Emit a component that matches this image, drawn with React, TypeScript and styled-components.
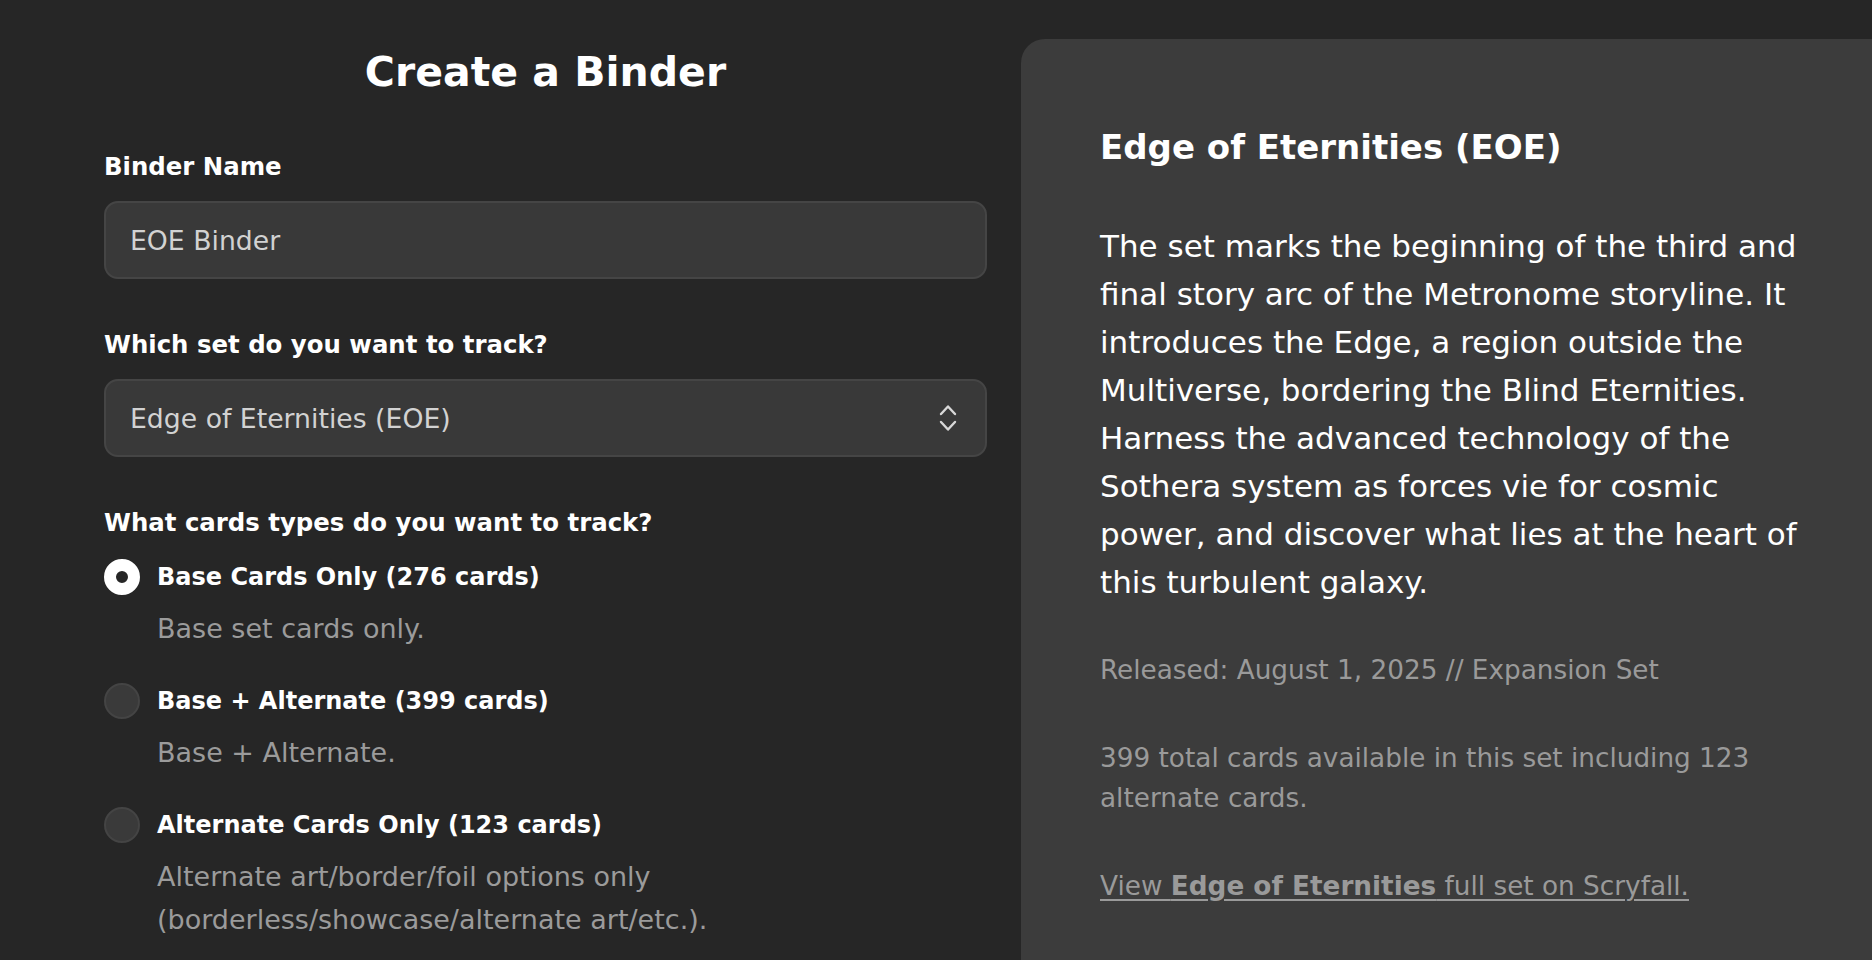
import React from "react";
import styled, { createGlobalStyle } from "styled-components";

const GlobalStyle = createGlobalStyle`
  html, body {
    margin: 0;
    padding: 0;
    background-color: #262626;
    font-family: "DejaVu Sans", "Noto Sans", sans-serif;
    color: #ffffff;
  }
  * {
    box-sizing: border-box;
  }
`;

const Page = styled.div`
  display: flex;
  align-items: flex-start;
  height: 960px;
  overflow: hidden;
`;

const FormColumn = styled.div`
  width: 1021px;
  flex-shrink: 0;
  padding: 48px 34px 0 104px;
`;

const Title = styled.h1`
  margin: 0 0 56px;
  text-align: center;
  font-size: 41px;
  line-height: 48px;
  font-weight: 700;
`;

const Field = styled.div`
  display: flex;
  flex-direction: column;
  gap: 19px;
  margin-bottom: 51px;
`;

const Label = styled.label`
  font-size: 24.4px;
  line-height: 30px;
  font-weight: 700;
  color: #ffffff;
`;

const TextInput = styled.input`
  height: 78px;
  width: 100%;
  border-radius: 14px;
  border: 2px solid #454545;
  background-color: #393939;
  padding: 0 24px;
  font-family: inherit;
  font-size: 26.7px;
  color: #d2d2d2;
  outline: none;
`;

const SelectBox = styled.div`
  height: 78px;
  border-radius: 14px;
  border: 2px solid #454545;
  background-color: #393939;
  padding: 0 28px 0 24px;
  display: flex;
  align-items: center;
  justify-content: space-between;
  font-size: 26.7px;
  color: #d2d2d2;
`;

const Chevrons = styled.svg`
  width: 18px;
  height: 30px;
  flex-shrink: 0;
`;

const RadioList = styled.div`
  display: flex;
  flex-direction: column;
  gap: 33px;
  margin-top: 21px;
`;

const RadioOption = styled.div`
  display: flex;
  flex-direction: column;
  gap: 12px;
`;

const RadioRow = styled.div`
  display: flex;
  align-items: center;
  gap: 17px;
`;

const RadioDot = styled.span<{ $checked?: boolean }>`
  width: 36px;
  height: 36px;
  border-radius: 50%;
  flex-shrink: 0;
  background-color: ${(p) => (p.$checked ? "#262626" : "#3a3a3a")};
  border: ${(p) => (p.$checked ? "12px solid #ffffff" : "2px solid #444444")};
`;

const RadioLabel = styled.span`
  font-size: 24px;
  line-height: 36px;
  font-weight: 700;
`;

const RadioDesc = styled.div`
  padding-left: 53px;
  max-width: 670px;
  font-size: 27px;
  line-height: 43px;
  color: #9b9b9b;
`;

const InfoPanel = styled.div`
  flex: 1;
  margin-top: 39px;
  height: 1000px;
  background-color: #3c3c3c;
  border-radius: 24px 0 0 0;
  padding: 88px 50px 0 79px;
`;

const SetTitle = styled.h2`
  margin: 0 0 55px;
  font-size: 34px;
  line-height: 40px;
  font-weight: 700;
`;

const SetText = styled.p`
  margin: 0 0 44px;
  max-width: 718px;
  font-size: 31px;
  line-height: 48px;
  color: #ffffff;
`;

const Meta = styled.p`
  margin: 0 0 48px;
  max-width: 712px;
  font-size: 26.3px;
  line-height: 40px;
  color: #9a9a9a;
`;

const ScryfallLink = styled.a`
  font-size: 26.3px;
  line-height: 40px;
  color: #9a9a9a;
  text-decoration: underline;
  text-underline-offset: 4px;

  strong {
    font-weight: 700;
  }
`;

const options = [
  { label: "Base Cards Only (276 cards)", desc: "Base set cards only.", checked: true },
  { label: "Base + Alternate (399 cards)", desc: "Base + Alternate.", checked: false },
  {
    label: "Alternate Cards Only (123 cards)",
    desc: "Alternate art/border/foil options only (borderless/showcase/alternate art/etc.).",
    checked: false,
  },
];

export default function App() {
  return (
    <>
      <GlobalStyle />
      <Page>
        <FormColumn>
          <Title>Create a Binder</Title>
          <Field>
            <Label>Binder Name</Label>
            <TextInput defaultValue="EOE Binder" />
          </Field>
          <Field>
            <Label>Which set do you want to track?</Label>
            <SelectBox>
              <span>Edge of Eternities (EOE)</span>
              <Chevrons viewBox="0 0 18 30" fill="none" stroke="#d8d8d8" strokeWidth="2.4" strokeLinecap="round" strokeLinejoin="round">
                <path d="M2 11 L9 3.5 L16 11" />
                <path d="M2 19 L9 26.5 L16 19" />
              </Chevrons>
            </SelectBox>
          </Field>
          <Label>What cards types do you want to track?</Label>
          <RadioList>
            {options.map((o) => (
              <RadioOption key={o.label}>
                <RadioRow>
                  <RadioDot $checked={o.checked} />
                  <RadioLabel>{o.label}</RadioLabel>
                </RadioRow>
                <RadioDesc>{o.desc}</RadioDesc>
              </RadioOption>
            ))}
          </RadioList>
        </FormColumn>
        <InfoPanel>
          <SetTitle>Edge of Eternities (EOE)</SetTitle>
          <SetText>
            The set marks the beginning of the third and final story arc of the Metronome
            storyline. It introduces the Edge, a region outside the Multiverse, bordering the
            Blind Eternities. Harness the advanced technology of the Sothera system as forces vie
            for cosmic power, and discover what lies at the heart of this turbulent galaxy.
          </SetText>
          <Meta>Released: August 1, 2025 // Expansion Set</Meta>
          <Meta>399 total cards available in this set including 123 alternate cards.</Meta>
          <ScryfallLink href="#">
            View <strong>Edge of Eternities</strong> full set on Scryfall.
          </ScryfallLink>
        </InfoPanel>
      </Page>
    </>
  );
}
